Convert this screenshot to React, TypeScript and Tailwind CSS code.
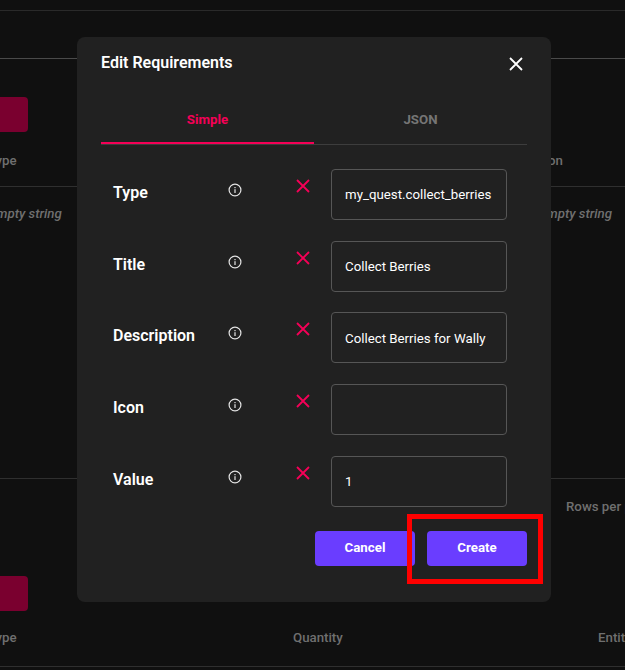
const fields = [
  { label: "Type", value: "my_quest.collect_berries" },
  { label: "Title", value: "Collect Berries" },
  { label: "Description", value: "Collect Berries for Wally" },
  { label: "Icon", value: "" },
  { label: "Value", value: "1" },
];

const InfoIcon = () => (
  <svg width="14" height="14" viewBox="0 0 14 14" fill="none" className="text-[#e4e4e4]">
    <circle cx="7" cy="7" r="5.9" stroke="currentColor" strokeWidth="1.2" />
    <rect x="6.4" y="6.2" width="1.2" height="3.8" fill="currentColor" />
    <rect x="6.4" y="4" width="1.2" height="1.2" fill="currentColor" />
  </svg>
);

const CloseIcon = ({ className }: { className: string }) => (
  <svg width="14" height="14" viewBox="0 0 14 14" fill="none" className={className}>
    <path d="M1 1L13 13M13 1L1 13" stroke="currentColor" strokeWidth="1.8" />
  </svg>
);

const App = () => {
  return (
    <div className="relative h-[670px] w-[625px] overflow-hidden bg-[#101010] font-['Roboto',sans-serif]">
      {/* Page behind the dialog */}
      <div className="h-[10px] border-b border-[#2a2a2a] box-content" />
      <div className="h-[47px] border-b border-[#4a4a4a] box-content" />
      <div className="mt-[38px] h-[35px] w-[28px] rounded-r bg-[#7a002f]" />
      <div className="mt-[20px] flex h-[35px] justify-between border-b border-[#2f2f2f] text-[13.28px] font-medium text-[#6f6f6f]">
        <span className="ml-[-12px] shrink-0 leading-[17px]">Type</span>
        <span className="mr-[62px] shrink-0 leading-[17px]">Description</span>
      </div>
      <div className="mt-[17px] flex h-[275px] justify-between border-b border-[#2f2f2f] text-[13.28px] font-medium italic text-[#6f6f6f]">
        <span className="ml-[-11px] shrink-0 leading-[20px]">Empty string</span>
        <span className="mr-[13px] shrink-0 leading-[20px]">Empty string</span>
      </div>
      <div className="mt-[19px] flex h-[17px] text-[13.28px] font-medium text-[#6f6f6f]">
        <span className="ml-[566px] shrink-0 leading-[17px]">Rows per page</span>
      </div>
      <div className="mt-[61px] h-[35px] w-[28px] rounded-r bg-[#7a002f]" />
      <div className="mt-[18px] flex h-[38px] border-b border-[#2f2f2f] text-[13.28px] font-medium text-[#6f6f6f]">
        <span className="ml-[-12px] w-[305px] shrink-0 leading-[17px]">Type</span>
        <span className="w-[305px] shrink-0 leading-[17px]">Quantity</span>
        <span className="shrink-0 leading-[17px]">Entity</span>
      </div>

      {/* Dialog */}
      <div className="absolute left-[77px] top-[37px] flex h-[565px] w-[474px] flex-col rounded-lg bg-[#212121] px-6 pt-[17px]">
        <div className="flex h-[18px] items-center justify-between">
          <h2 className="text-base font-semibold leading-[18px] text-white">Edit Requirements</h2>
          <CloseIcon className="mt-[2px] mr-[4px] text-white" />
        </div>
        <div className="mt-[23px] flex h-[50px] border-b border-[#3d3d3d] text-[13.28px] font-bold">
          <div className="flex h-[49px] w-[213px] items-center justify-center border-b-2 border-[#f50057] pt-[2px] text-[#f50057]">
            Simple
          </div>
          <div className="flex h-[49px] flex-1 items-center justify-center text-[#757575]">JSON</div>
        </div>
        <div className="mt-[23.8px] flex flex-col gap-[20.75px]">
          {fields.map((f) => (
            <div key={f.label} className="flex h-[51px] items-start">
              <span className="mt-[15px] w-[115px] pl-[12px] text-base font-semibold leading-[18px] text-white">
                {f.label}
              </span>
              <span className="mt-[14px] ml-[12px] flex w-[14px]">
                <InfoIcon />
              </span>
              <span className="mt-[10px] ml-[54px] flex w-[14px]">
                <CloseIcon className="text-[#f50057]" />
              </span>
              <div className="ml-[21px] flex h-[51px] w-[176px] items-center rounded border border-[#565656] px-[13px] pt-[2px] text-[13.28px] text-white">
                {f.value}
              </div>
            </div>
          ))}
        </div>
        <div className="mt-[24.2px] flex justify-end gap-3">
          <button className="h-[35px] w-[100px] rounded bg-[#6a3dff] pb-[2px] text-[13.28px] font-bold text-white">Cancel</button>
          <button className="h-[35px] w-[100px] rounded bg-[#6a3dff] pb-[2px] text-[13.28px] font-bold text-white">Create</button>
        </div>
      </div>

      {/* Highlight drawn over the screenshot */}
      <div className="absolute left-[407px] top-[514px] h-[70px] w-[136px] border-[5px] border-[#ff0000]" />
    </div>
  );
};

export default App;
